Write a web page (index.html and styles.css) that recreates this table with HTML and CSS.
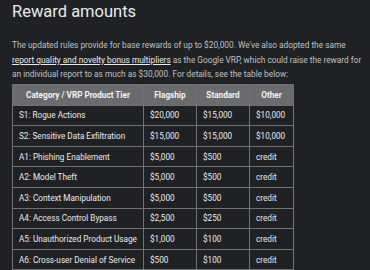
FILE: index.html
```html
<!DOCTYPE html>
<html lang="en">
<head>
    <meta charset="UTF-8">
    <meta name="viewport" content="width=device-width, initial-scale=1.0">
    <title>Reward amounts</title>
    <link rel="stylesheet" href="styles.css">
</head>
<body>
    <section class="rewards">
        <h2 class="rewards-title">Reward amounts</h2>
        <p class="rewards-intro">
            The updated rules provide for base rewards of up to $20,000. We've also adopted the same<br>
            <a href="#" class="rewards-link">report quality and novelty bonus multipliers</a> as the Google VRP, which could raise the reward for<br>
            an individual report to as much as $30,000. For details, see the table below:
        </p>

        <table class="reward-table">
            <colgroup>
                <col class="col-cat">
                <col class="col-flag">
                <col class="col-std">
                <col class="col-other">
            </colgroup>
            <thead>
                <tr>
                    <th>Category / VRP Product Tier</th>
                    <th>Flagship</th>
                    <th>Standard</th>
                    <th>Other</th>
                </tr>
            </thead>
            <tbody>
                <tr><td>S1: Rogue Actions</td><td>$20,000</td><td>$15,000</td><td>$10,000</td></tr>
                <tr><td>S2: Sensitive Data Exfiltration</td><td>$15,000</td><td>$15,000</td><td>$10,000</td></tr>
                <tr><td>A1: Phishing Enablement</td><td>$5,000</td><td>$500</td><td>credit</td></tr>
                <tr><td>A2: Model Theft</td><td>$5,000</td><td>$500</td><td>credit</td></tr>
                <tr><td>A3: Context Manipulation</td><td>$5,000</td><td>$500</td><td>credit</td></tr>
                <tr><td>A4: Access Control Bypass</td><td>$2,500</td><td>$250</td><td>credit</td></tr>
                <tr><td>A5: Unauthorized Product Usage</td><td>$1,000</td><td>$100</td><td>credit</td></tr>
                <tr><td>A6: Cross-user Denial of Service</td><td>$500</td><td>$100</td><td>credit</td></tr>
            </tbody>
        </table>
    </section>
</body>
</html>
```

FILE: styles.css
```css
* {
    margin: 0;
    padding: 0;
    box-sizing: border-box;
}

body {
    background-color: #202124;
    color: #e8eaed;
    font-family: Roboto, 'Liberation Sans', sans-serif;
    overflow: hidden;
}

.rewards {
    padding: 1px 12px 0;
}

.rewards-title {
    font-size: 16.5px;
    font-weight: 400;
    line-height: 22px;
    color: #e8eaed;
}

.rewards-intro {
    margin-top: 15px;
    font-size: 8.3px;
    line-height: 14.7px;
    color: #bdc1c6;
    white-space: nowrap;
}

.rewards-link {
    color: #e8eaed;
    text-decoration: underline;
}

.reward-table {
    margin-top: 2px;
    width: 281px;
    border-collapse: collapse;
    table-layout: fixed;
    font-size: 8.2px;
}

.reward-table th,
.reward-table td {
    border: 1px solid #707174;
    padding: 0 6px;
    white-space: nowrap;
    overflow: hidden;
}

.reward-table th {
    background: #6b6b6d;
    color: #f1f3f4;
    font-weight: 700;
    text-align: center;
    height: 20.5px;
}

.reward-table td {
    color: #e8eaed;
    text-align: left;
    height: 20.6px;
}

.col-cat { width: 131px; }
.col-flag { width: 53px; }
.col-std { width: 53px; }
.col-other { width: 44px; }
```
